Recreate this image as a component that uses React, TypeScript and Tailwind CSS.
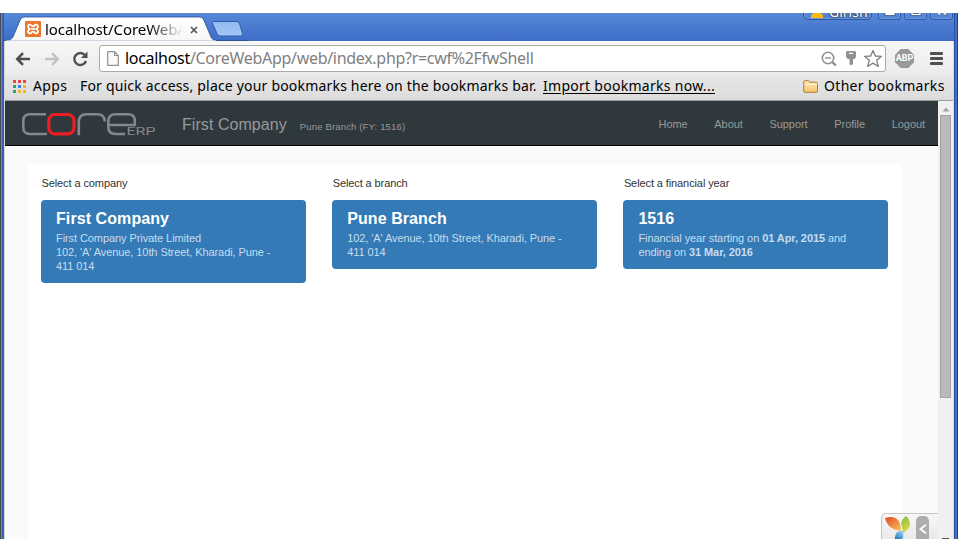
import type { ReactNode } from "react";

const ui = "font-['Noto_Sans','Open_Sans',sans-serif]";

function XamppIcon() {
  return (
    <svg width="16" height="16" viewBox="0 0 16 16" className="shrink-0">
      <rect x="0" y="0" width="16" height="16" rx="1" fill="#e9742b" />
      <path
        d="M4.600 3.600a1.900 1.900 0 0 0-.8 3.400c.6.5.6 1.500 0 2a1.900 1.900 0 1 0 2.900 2.200c.5-.7 2.100-.7 2.600 0A1.900 1.900 0 1 0 12.200 9c-.6-.5-.6-1.500 0-2a1.900 1.900 0 1 0-2.900-2.200c-.5.7-2.100.7-2.600 0a1.900 1.900 0 0 0-2.100-1.200z"
        fill="none"
        stroke="#fff"
        strokeWidth="1.800"
      />
      <path d="M5.500 8h5" stroke="#fff" strokeWidth="1.800" />
    </svg>
  );
}

function TitleBar() {
  return (
    <div className="flex h-[28px] bg-gradient-to-b from-[#5788d6] to-[#3e6cc8]">
      <div className="relative flex h-full w-[204px] shrink-0 items-center pl-[21px]">
        <svg className="absolute left-0 top-0" width="245" height="28" viewBox="0 0 245 28">
          <defs>
            <linearGradient id="tab" x1="0" y1="0" x2="0" y2="1">
              <stop offset="0" stopColor="#fff" />
              <stop offset="1" stopColor="#f7f7f7" />
            </linearGradient>
            <linearGradient id="newTab" x1="0" y1="0" x2="0" y2="1">
              <stop offset="0" stopColor="#93bbee" />
              <stop offset="1" stopColor="#a3c7f5" />
            </linearGradient>
          </defs>
          <path d="M0 27.500H245" stroke="#2d4f94" />
          <path
            d="M1 28C5 27.500 7.500 26.500 9 24L16 7.500C17 5 18.500 4 21 4H195C197.500 4 199 5 200 7.500L206.500 23C208 26.500 209.500 27.500 213.500 28Z"
            fill="url(#tab)"
            stroke="#2d4f94"
            strokeWidth="0.800"
          />
          <path d="M2 28.500H212" stroke="#f7f7f7" strokeWidth="2" />
          <path
            d="M209.500 8.500H232Q234.500 8.500 235.500 10.500L238.500 20.500Q239 23 236.500 23H216.500Q214 23 213 20.500L208.500 10.500Q208 8.500 209.500 8.500Z"
            fill="url(#newTab)"
            stroke="#315cab"
          />
        </svg>
        <div className="relative mt-[4px] flex items-center">
          <XamppIcon />
          <span
            className={`ml-[4px] w-[138px] overflow-hidden whitespace-nowrap bg-gradient-to-r from-black from-75% to-transparent bg-clip-text text-[15px] leading-[20px] tracking-[-0.050px] text-transparent ${ui}`}
          >
            localhost/CoreWebApp
          </span>
          <svg width="8" height="8" viewBox="0 0 8 8" className="ml-[7px] mt-[1px]">
            <path d="M1 1L7 7M7 1L1 7" stroke="#555" strokeWidth="1.700" />
          </svg>
        </div>
      </div>
      <div className="ml-auto flex h-[8px] gap-[6px] overflow-hidden">
        <div className="-mt-[12px] flex h-[19px] w-[69px] items-center rounded-[5px] border border-[#2e559f] pl-[6px] shadow-[inset_0_0_0_1px_#6b96dd]">
          <svg width="15" height="10" viewBox="0 0 15 10" className="mt-[5px]">
            <path d="M1 10V7L7 3L13 7V10Z" fill="#fdb913" />
          </svg>
          <span className={`ml-[4px] mt-[3px] text-[14px] leading-[16px] text-white [text-shadow:0_0_2px_#222,0_0_2px_#222] ${ui}`}>
            Girish
          </span>
        </div>
        <div className="flex gap-[3px]">
          {["min", "max", "close"].map((kind) => (
            <div
              key={kind}
              className="-mt-[12px] flex h-[19px] w-[23px] items-end justify-center rounded-[3px] border border-[#315aa6] pb-[3px] shadow-[inset_0_0_0_1px_#6b96dd]"
            >
              <svg width="12" height="12" viewBox="0 0 12 12" stroke="#2e477a" strokeWidth="0.700" fill="#fff">
                {kind === "min" && <path d="M1 8.500H11V11.500H1Z" />}
                {kind === "max" && <path fillRule="evenodd" d="M1 1H11V11.500H1ZM3 4V9.500H9V4Z" />}
                {kind === "close" && (
                  <path d="M1 3L3 1L6 4L9 1L11 3L8 6L11 10L9 11.500L6 8.500L3 11.500L1 10L4 6Z" />
                )}
              </svg>
            </div>
          ))}
        </div>
        <div className="-ml-[6px] w-px" />
      </div>
    </div>
  );
}

function NavArrow({ flip, color }: { flip?: boolean; color: string }) {
  return (
    <svg width="16" height="14" viewBox="0 0 16 14" className={flip ? "-scale-x-100" : ""}>
      <path d="M8 1.200L2.200 7L8 12.800M2.500 7H15" fill="none" stroke={color} strokeWidth="2.500" />
    </svg>
  );
}

function Toolbar() {
  return (
    <div className="flex h-[34px] items-start bg-gradient-to-b from-[#f7f7f7] to-[#ebebeb] pl-[10px] pt-[4px]">
      <div className="mt-[6px] flex items-center">
        <NavArrow color="#4d4d4d" />
        <div className="ml-[13px]">
          <NavArrow flip color="#c2c2c2" />
        </div>
        <svg width="17" height="16" viewBox="0 0 17 16" className="ml-[12px]">
          <path d="M13 4.200A6 6 0 1 0 14 10" fill="none" stroke="#505050" strokeWidth="2.400" />
          <path d="M15.500 0.500V7H9Z" fill="#505050" />
        </svg>
      </div>
      <div className="ml-[10px] flex h-[27px] w-[787px] items-center rounded-[3px] border border-[#ababab] bg-white pl-[7px]">
        <svg width="12" height="15" viewBox="0 0 12 15" className="shrink-0">
          <path d="M0.700 0.700H7.500L11.300 4.500V14.300H0.700ZM7.500 0.700V4.500H11.300" fill="#fafafa" stroke="#929292" strokeWidth="1.200" />
        </svg>
        <span className={`-mt-[2px] ml-[6px] whitespace-nowrap text-[16px] leading-[24px] tracking-[-0.300px] text-[#808080] ${ui}`}>
          <span className="text-black">localhost</span>/CoreWebApp/web/index.php?r=cwf%2FfwShell
        </span>
        <div className="ml-auto flex items-center pr-[2px]">
          <svg width="16" height="16" viewBox="0 0 16 16">
            <circle cx="7" cy="7" r="5.700" fill="none" stroke="#919191" strokeWidth="1.600" />
            <path d="M4 7H10" stroke="#919191" strokeWidth="1.400" />
            <path d="M11.300 11L14.800 14.500" stroke="#919191" strokeWidth="2.400" />
          </svg>
          <svg width="12" height="16" viewBox="0 0 12 16" className="-mt-[1px] ml-[8px]">
            <path fillRule="evenodd" d="M2 1H10L11 2V7L9.500 9H8V14L6 15.500L4.500 14V9H2.500L1 7V2ZM4 2.800V4H8V2.800Z" fill="#919191" />
          </svg>
          <svg width="20" height="19" viewBox="0 0 20 19" className="ml-[6px]">
            <path
              d="M10 1.500L12.300 7L18.500 7.300L13.700 11.300L15.300 17.500L10 14.100L4.700 17.500L6.300 11.300L1.500 7.300L7.700 7Z"
              fill="#fff"
              stroke="#818181"
              strokeWidth="1.300"
              strokeLinejoin="round"
            />
          </svg>
        </div>
      </div>
      <div className="ml-[9px] mt-[4px] flex h-[19px] w-[19px] items-center justify-center bg-[#999] [clip-path:polygon(30%_0,70%_0,100%_30%,100%_70%,70%_100%,30%_100%,0_70%,0_30%)]">
        <span className="font-['Roboto',sans-serif] text-[9px] font-bold leading-none text-white">ABP</span>
      </div>
      <div className="ml-[16px] mt-[7px] flex w-[13px] flex-col gap-[2px]">
        <div className="h-[3px] rounded-[1px] bg-[#505050]" />
        <div className="h-[3px] rounded-[1px] bg-[#505050]" />
        <div className="h-[3px] rounded-[1px] bg-[#505050]" />
      </div>
    </div>
  );
}

const appDots = [
  "bg-[#ef4438]", "bg-[#ef4438]", "bg-[#ef4438]",
  "bg-[#2da562]", "bg-[#3487e8]", "bg-[#f9b51c]",
  "bg-[#2da562]", "bg-[#f9b51c]", "bg-[#f9b51c]",
];

function BookmarksBar() {
  return (
    <div className={`flex h-[26px] items-center whitespace-nowrap border-b border-[#9c9c9c] bg-gradient-to-b from-[#e7e7e7] to-[#dcdcdc] pb-[3px] pl-[8px] text-[14px] leading-[20px] text-black ${ui}`}>
      <div className="mt-[1px] grid grid-cols-3 gap-[2px]">
        {appDots.map((c, i) => (
          <div key={i} className={`h-[3px] w-[3px] ${c}`} />
        ))}
      </div>
      <span className="ml-[7px] w-[47px] tracking-[0.400px]">Apps</span>
      <span className="w-[463px] tracking-[0.190px]">For quick access, place your bookmarks here on the bookmarks bar.</span>
      <span className="tracking-[0.280px] underline underline-offset-2">Import bookmarks now...</span>
      <div className="ml-auto flex items-center">
        <svg width="16" height="13" viewBox="0 0 16 13">
          <defs>
            <linearGradient id="folder" x1="0" y1="0" x2="0" y2="1">
              <stop offset="0" stopColor="#ffebba" />
              <stop offset="1" stopColor="#f7c36c" />
            </linearGradient>
          </defs>
          <path
            d="M0.700 11V2Q0.700 0.700 2 0.700H5.500Q6.500 0.700 6.700 2.200H13.500Q14.500 2.200 14.500 3.500V11Q14.500 12.300 13.300 12.300H2Q0.700 12.300 0.700 11Z"
            fill="url(#folder)"
            stroke="#b27a2d"
          />
          <path d="M1.500 4.500H14" stroke="#fff2cf" />
        </svg>
        <span className="ml-[5px] w-[129px] tracking-[0.320px]">Other bookmarks</span>
      </div>
    </div>
  );
}

function Logo() {
  return (
    <svg width="135" height="26" viewBox="21 112 135 26" className="shrink-0">
      <g fill="none" stroke="#85888b" strokeWidth="2.600">
        <path d="M46 114.300H30Q23.300 114.300 23.300 121V127.500Q23.300 134 30 134H47" />
        <path d="M78.800 135.300V122Q78.800 114.300 86.500 114.300H97Q104.500 114.300 104.800 121.500" />
        <path d="M125 134H115.500Q108.300 134 108.300 127V121.500Q108.300 114.300 115.500 114.300H128Q134.800 114.300 134.800 121V125H108.500" />
      </g>
      <rect x="48.800" y="114.500" width="25.200" height="19.300" rx="6" fill="none" stroke="#ee1c25" strokeWidth="3.200" />
      <text x="126.500" y="135.300" textLength="29" lengthAdjust="spacingAndGlyphs" fontFamily="Roboto, sans-serif" fontSize="11" fill="#85888b">
        ERP
      </text>
    </svg>
  );
}

function Header() {
  return (
    <div className="flex h-[45px] shrink-0 items-center border-b border-black bg-[#2e383d] pl-[16px] pr-[13px] text-[#999]">
      <div className="mt-[3px] flex">
        <Logo />
      </div>
      <span className="ml-[26px] mt-[3px] text-[16px] leading-[20px] tracking-[0.060px]">First Company</span>
      <span className="ml-[13px] mt-[7px] text-[9.500px] leading-[14px] tracking-[0.160px]">Pune Branch (FY: 1516)</span>
      <nav className="ml-auto mt-[2px] flex gap-[26.700px] text-[11px] leading-[16px] tracking-[-0.060px]">
        {["Home", "About", "Support", "Profile", "Logout"].map((n) => (
          <a key={n}>{n}</a>
        ))}
      </nav>
    </div>
  );
}

function Picker({ label, title, children }: { label: string; title: string; children: ReactNode }) {
  return (
    <section className="w-[264.500px]">
      <div className="pl-[0.500px] text-[11px] leading-[16px] tracking-[-0.100px] text-[#333]">{label}</div>
      <div className="mt-[9px] rounded-[4px] bg-[#337ab7] px-[15px] pb-[10px] pt-[10px]">
        <h4 className="text-[16px] font-bold leading-[18px] tracking-[0.080px] text-white">{title}</h4>
        <p className="mt-[3px] whitespace-nowrap text-[11px] leading-[14px] tracking-[-0.080px] text-[#c7ddef]">{children}</p>
      </div>
    </section>
  );
}

function YiiToolbar() {
  return (
    <div className="absolute bottom-0 right-0 flex h-[26px] w-[57px] overflow-hidden rounded-tl-[5px] border-l border-t border-[#c5c5c5] bg-gradient-to-b from-[#f7f7f7] to-[#e9e9e9] pl-[3px] pt-[2px]">
      <svg width="26" height="24" viewBox="0 0 26 24" className="shrink-0">
        <defs>
          <linearGradient id="petalRed" x1="0" y1="0" x2="1" y2="1">
            <stop offset="0" stopColor="#df4b27" />
            <stop offset="1" stopColor="#fbc15c" />
          </linearGradient>
          <linearGradient id="petalGreen" x1="0" y1="0" x2="0.500" y2="1">
            <stop offset="0" stopColor="#82b83c" />
            <stop offset="1" stopColor="#dedc45" />
          </linearGradient>
          <linearGradient id="petalBlue" x1="0" y1="1" x2="0.500" y2="0">
            <stop offset="0" stopColor="#086cad" />
            <stop offset="1" stopColor="#90c9ee" />
          </linearGradient>
        </defs>
        <path d="M0 2Q9-0.500 13 4Q16 8 16 14.500Q3 14 0 2Z" fill="url(#petalRed)" />
        <path d="M21 0Q26.500 5 24.500 11Q22 15 17.500 17Q18 13 16.300 8Q16.500 3 21 0Z" fill="url(#petalGreen)" />
        <path d="M18 15Q12 14 10.500 19L9.500 24H17Q19 20 18 15Z" fill="url(#petalBlue)" />
      </svg>
      <div className="ml-[5px] flex h-[30px] w-[13px] shrink-0 justify-center rounded-[5px] bg-[#adadad] pt-[8px]">
        <svg width="8" height="10" viewBox="0 0 8 10">
          <path d="M7 0.800L1.500 5L7 9.200" fill="none" stroke="#fff" strokeWidth="1.700" />
        </svg>
      </div>
    </div>
  );
}

function Page() {
  return (
    <div className="relative flex min-w-0 flex-1 flex-col overflow-hidden bg-[#fafafa] font-['Liberation_Sans',Arial,sans-serif]">
      <Header />
      <main className="ml-[23px] mt-[18px] flex w-[874px] flex-1 gap-[26.700px] rounded-t-[4px] bg-white pl-[13px] pt-[11px]">
        <Picker label="Select a company" title="First Company">
          First Company Private Limited
          <br />
          102, &apos;A&apos; Avenue, 10th Street, Kharadi, Pune -
          <br />
          411 014
        </Picker>
        <Picker label="Select a branch" title="Pune Branch">
          102, &apos;A&apos; Avenue, 10th Street, Kharadi, Pune -
          <br />
          411 014
        </Picker>
        <Picker label="Select a financial year" title="1516">
          Financial year starting on <b>01 Apr, 2015</b> and
          <br />
          ending on <b>31 Mar, 2016</b>
        </Picker>
      </main>
      <YiiToolbar />
    </div>
  );
}

function Scrollbar() {
  return (
    <div className="flex w-[15px] flex-col items-center bg-[#f0f0f0]">
      <svg width="8" height="5" viewBox="0 0 8 5" className="mt-[6px] shrink-0">
        <path d="M4 0.500L7.500 4.500H0.500Z" fill="#a3a3a3" />
      </svg>
      <div className="mt-[3px] h-[283px] w-[11px] border border-[#a3a3a3] bg-[#bababa]" />
      <div className="mt-auto h-px w-[7px] bg-[#505050]" />
    </div>
  );
}

export default function App() {
  return (
    <div className="h-[552px] w-[958px] overflow-hidden bg-white pt-[13px]">
      <div className="flex h-[526px]">
        <div className="flex w-[4px] shrink-0">
          <div className="w-px bg-[#4a4a4c]" />
          <div className="w-px bg-[#7187b5]" />
          <div className="w-[2px] bg-[#3660b4]" />
        </div>
        <div className="flex min-w-0 flex-1 flex-col">
          <TitleBar />
          <div className="flex min-h-0 flex-1 flex-col border-x border-[#d5d8dc]">
            <Toolbar />
            <BookmarksBar />
            <div className="flex min-h-0 flex-1">
              <Page />
              <Scrollbar />
            </div>
          </div>
        </div>
        <div className="flex w-[4px] shrink-0">
          <div className="w-px bg-[#2b509d]" />
          <div className="w-[2px] bg-[#3f6fcb]" />
          <div className="w-px bg-[#333f58]" />
        </div>
      </div>
    </div>
  );
}
